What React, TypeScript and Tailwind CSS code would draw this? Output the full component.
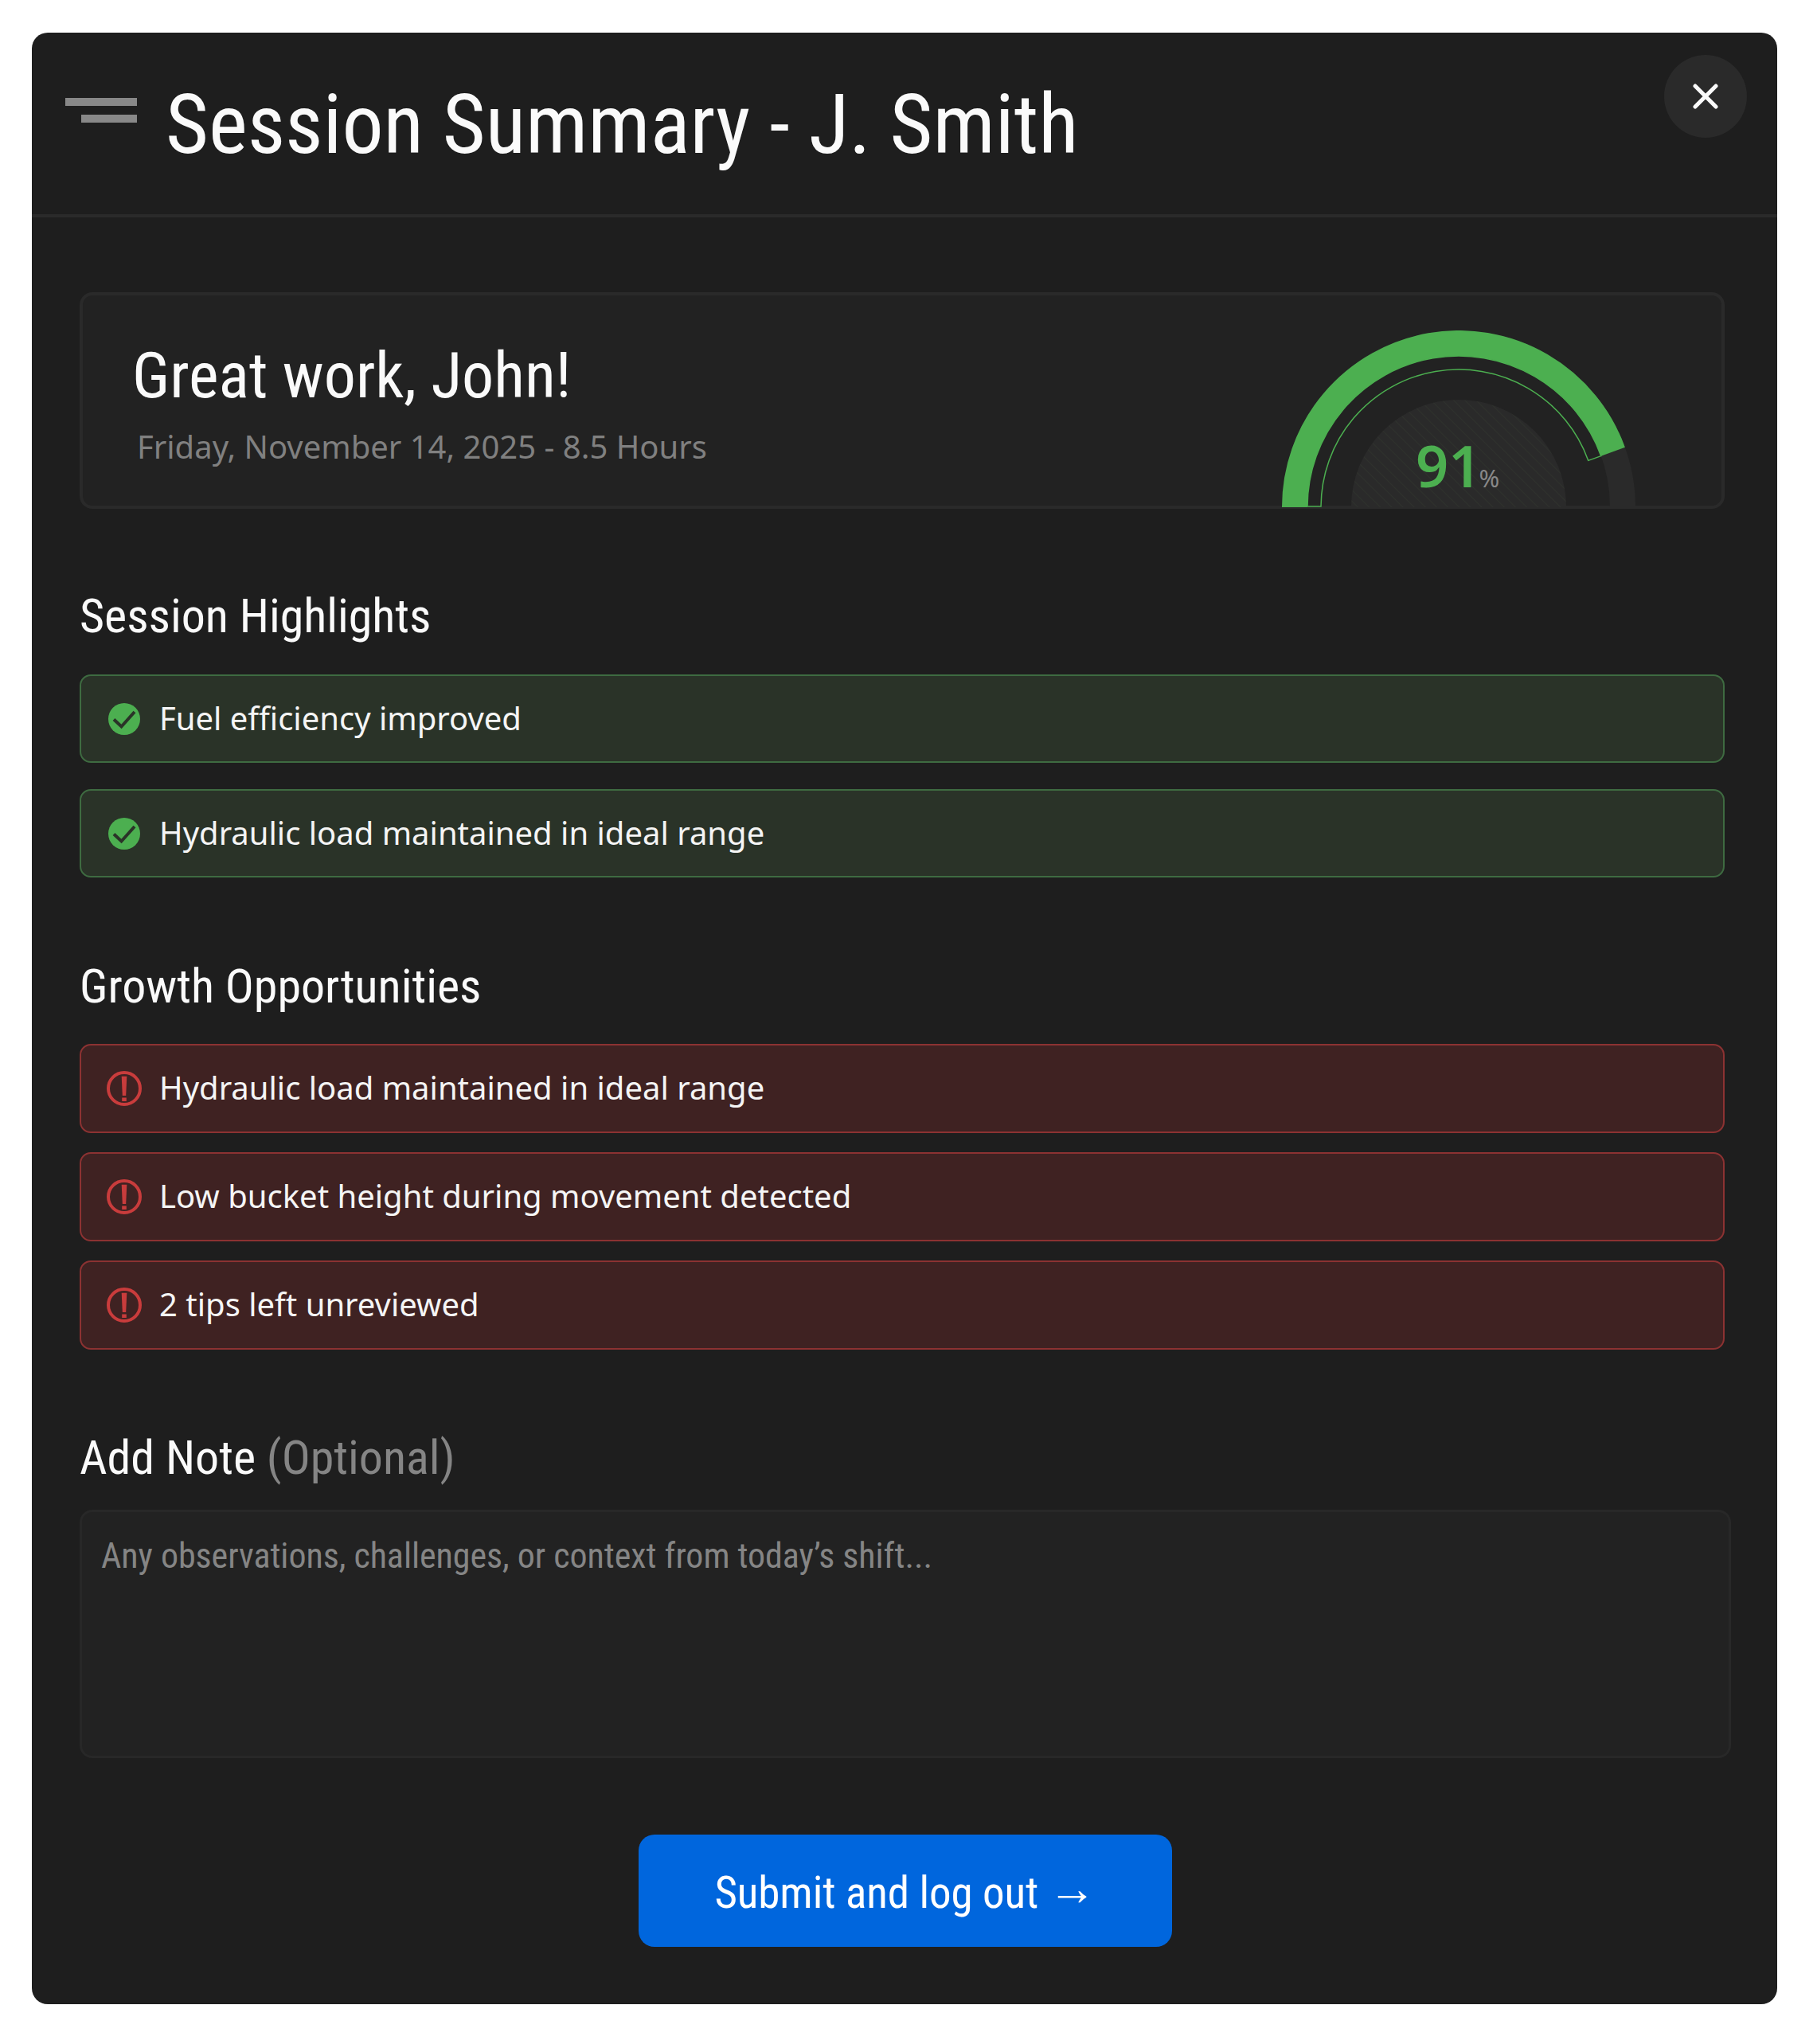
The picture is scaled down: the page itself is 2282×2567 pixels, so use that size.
const cond = "font-['Roboto',sans-serif] [font-stretch:75%]";

function Check() {
  return (
    <svg width="40" height="40" viewBox="0 0 40 40" className="shrink-0">
      <circle cx="20" cy="20" r="20" fill="#4caf50" />
      <path d="M7 20.5 L16.5 29.5 L33 11" fill="none" stroke="#2a3328" strokeWidth="4" />
    </svg>
  );
}

function Alert() {
  return (
    <svg width="44" height="44" viewBox="0 0 44 44" className="shrink-0">
      <circle cx="22" cy="22" r="20" fill="none" stroke="#c93c3c" strokeWidth="4" />
      <path d="M18.7 6.7 H25.3 L24.2 31 H19.8 Z" fill="#c93c3c" />
      <rect x="19.2" y="33.5" width="5.6" height="4.5" fill="#c93c3c" />
    </svg>
  );
}

function Good({ text }: { text: string }) {
  return (
    <div className="flex h-[111px] items-center gap-[24px] rounded-[14px] border-[2px] border-[#3e6b41] bg-[#2a3328] pl-[34px] font-['Noto_Sans',sans-serif] text-[40px] text-[#f5f5f5]">
      <Check />
      <span className="pb-[2px]">{text}</span>
    </div>
  );
}

function Bad({ text }: { text: string }) {
  return (
    <div className="flex h-[112px] items-center gap-[22px] rounded-[14px] border-[2px] border-[#8c3232] bg-[#3f2222] pl-[32px] font-['Noto_Sans',sans-serif] text-[40px] text-[#f5f5f5]">
      <Alert />
      <span className="pb-[2px]">{text}</span>
    </div>
  );
}

function Gauge() {
  const cx = 222, cy = 222;
  const a = (19.8 * Math.PI) / 180;
  const pt = (r: number) => `${cx + r * Math.cos(a)} ${cy - r * Math.sin(a)}`;
  return (
    <div className="relative mb-[-2px] h-[222px] w-[444px] shrink-0 overflow-hidden">
      <svg width="444" height="222" viewBox="0 0 444 222" className="block">
        <defs>
          <pattern id="hatch" width="10" height="10" patternUnits="userSpaceOnUse" patternTransform="rotate(-45)">
            <rect width="10" height="10" fill="#2a2a2a" />
            <line x1="0" y1="0" x2="0" y2="10" stroke="#333a2f" strokeWidth="1" />
          </pattern>
        </defs>
        <circle cx={cx} cy={cy} r="135" fill="url(#hatch)" />
        <path d="M16 222 A206 206 0 0 1 428 222" fill="none" stroke="#2a2a2a" strokeWidth="32" />
        <path d={`M16 222 A206 206 0 0 1 ${pt(206)}`} fill="none" stroke="#4caf50" strokeWidth="32" />
        <path d={`M32 221 A190 190 0 0 1 ${pt(190)} L ${pt(173)} A173 173 0 0 0 49 221 Z`} fill="none" stroke="#4caf50" strokeWidth="1.5" />
      </svg>
      <div className="absolute left-[168px] top-[133px] flex items-baseline gap-0 font-['Noto_Sans',sans-serif] leading-none">
        <span className="text-[72px] font-semibold text-[#4caf50]">91</span>
        <span className="ml-[-3px] text-[31px] text-[#888888]">%</span>
      </div>
    </div>
  );
}

export default function App() {
  return (
    <div className="bg-white px-[40px] pb-[50px] pt-[41px]">
      <div className="h-[2476px] w-[2192px] overflow-hidden rounded-[20px] bg-[#1e1e1e]">
        <header className="relative flex h-[232px] items-start border-b-[4px] border-[#2a2a2a] pl-[42px] pt-[82px]">
          <div className="flex w-[90px] flex-col items-end gap-[11px]">
            <div className="h-[10px] w-[90px] bg-[#888888]" />
            <div className="h-[10px] w-[70px] bg-[#888888]" />
          </div>
          <h1 className={`ml-[36px] mt-[-27px] text-[104px] font-normal leading-[122px] text-[#fafafa] ${cond}`}>
            Session Summary - J. Smith
          </h1>
          <button className="absolute right-[38px] top-[28px] flex h-[104px] w-[104px] items-center justify-center rounded-full bg-[#2a2a2a]">
            <svg width="32" height="32" viewBox="0 0 32 32">
              <path d="M3 3 L29 29 M29 3 L3 29" stroke="#fafafa" strokeWidth="5" strokeLinecap="round" />
            </svg>
          </button>
        </header>

        <main className="px-[60px] pt-[94px]">
          <section className="flex h-[272px] w-[2066px] items-end justify-between rounded-[16px] border-[4px] border-[#2a2a2a] bg-[#222222] pl-[62px] pr-[108px]">
            <div className="self-start pt-[54px]">
              <h2 className={`text-[80px] font-normal leading-[94px] text-[#fafafa] ${cond}`}>Great work, John!</h2>
              <p className="ml-[6px] mt-[14px] font-['Noto_Sans',sans-serif] text-[40px] leading-[56px] text-[#808080]">
                Friday, November 14, 2025 - 8.5 Hours
              </p>
            </div>
            <Gauge />
          </section>

          <h3 className={`mt-[100px] text-[60px] font-normal leading-[70px] text-[#fafafa] ${cond}`}>Session Highlights</h3>
          <div className="mt-[38px] flex w-[2066px] flex-col gap-[33px]">
            <Good text="Fuel efficiency improved" />
            <Good text="Hydraulic load maintained in ideal range" />
          </div>

          <h3 className={`mt-[102px] text-[60px] font-normal leading-[70px] text-[#fafafa] ${cond}`}>Growth Opportunities</h3>
          <div className="mt-[37px] flex w-[2066px] flex-col gap-[24px]">
            <Bad text="Hydraulic load maintained in ideal range" />
            <Bad text="Low bucket height during movement detected" />
            <Bad text="2 tips left unreviewed" />
          </div>

          <h3 className={`mt-[101px] text-[60px] font-normal leading-[70px] text-[#fafafa] ${cond}`}>
            Add Note <span className="text-[#858585]">(Optional)</span>
          </h3>
          <textarea
            className={`mt-[30px] block h-[312px] w-[2074px] resize-none rounded-[16px] border-[3px] border-[#282828] bg-[#222222] px-[24px] pb-[30px] pt-[29px] text-[44px] leading-[52px] tracking-[-0.05px] placeholder:text-[#858585] ${cond}`}
            placeholder="Any observations, challenges, or context from today’s shift..."
          />
          <div className="ml-[2px] mt-[96px] flex justify-center">
            <button className={`h-[141px] w-[670px] rounded-[20px] bg-[#0066dd] text-[55px] leading-[60px] tracking-[-0.1px] text-white ${cond}`}>
              Submit and log out <span className="align-[4px] font-['Liberation_Sans',sans-serif] text-[60px]">→</span>
            </button>
          </div>
        </main>
      </div>
    </div>
  );
}
